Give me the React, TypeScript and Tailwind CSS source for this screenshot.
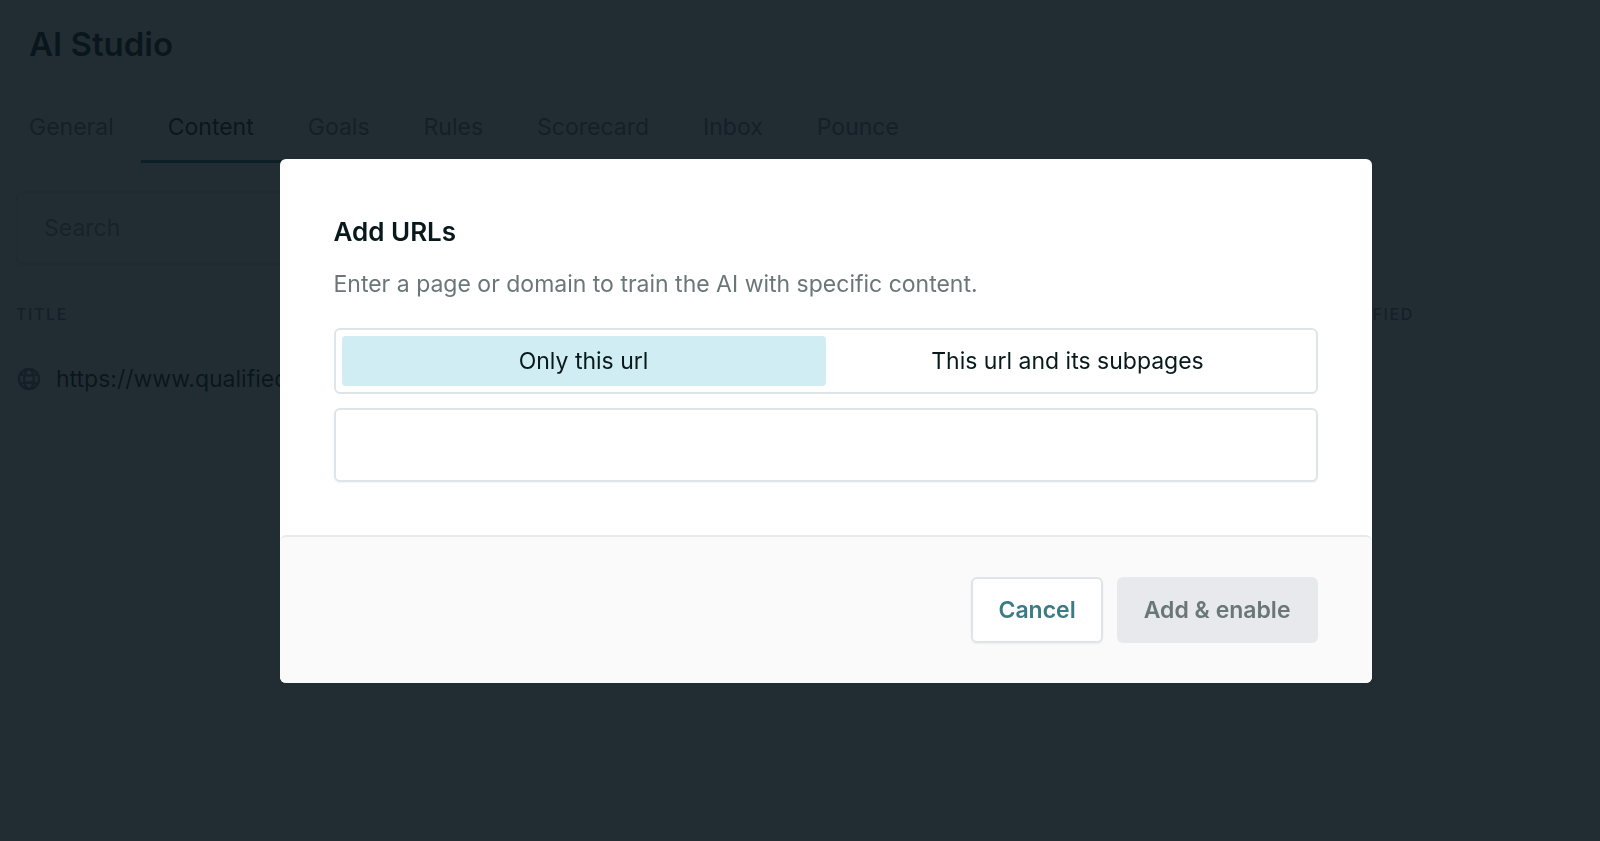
import React, { useState } from 'react';

const tabs = ['General', 'Content', 'Goals', 'Rules', 'Scorecard', 'Inbox', 'Pounce'];

const scopes = [
    { value: 'page', label: 'Only this url' },
    { value: 'subpages', label: 'This url and its subpages' },
];

const GlobeIcon: React.FC = () => (
    <svg className="size-6 shrink-0 text-[#6b7780]" viewBox="0 0 24 24" fill="none" stroke="currentColor" strokeWidth="2.4" aria-hidden="true">
        <circle cx="12" cy="12" r="10" />
        <ellipse cx="12" cy="12" rx="4.8" ry="10" />
        <path d="M3.2 7.4Q12 9.6 20.8 7.4M3.2 16.6Q12 14.4 20.8 16.6" />
    </svg>
);

const StudioPage: React.FC = () => (
    <main>
        <h1 className="px-[29px] pt-6 text-[33px] leading-10 font-semibold">AI Studio</h1>

        <nav className="mt-7 flex border-b border-[#eceff1] px-0.5">
            {tabs.map((tab) => (
                <a
                    key={tab}
                    href={`#${tab.toLowerCase()}`}
                    className={
                        tab === 'Content'
                            ? '-mb-px border-b-3 border-[#2f7482] px-[27px] pt-[17px] pb-[15px] text-[23px] leading-9'
                            : '-mb-px border-b-3 border-transparent px-[27px] pt-[17px] pb-[15px] text-[23px] leading-9 text-[#6b7780]'
                    }
                >
                    {tab}
                </a>
            ))}
        </nav>

        <div className="px-4 pt-7 pb-[26px]">
            <input
                type="search"
                aria-label="Search"
                placeholder="Search"
                className="block h-[73px] w-full max-w-[600px] rounded-md border-2 border-[#e3e7eb] bg-white px-[26px] text-[23px] shadow-sm placeholder:text-[#87928f]"
            />
        </div>

        <table className="w-full table-fixed border-collapse text-left">
            <thead>
                <tr className="h-12 border-y border-[#eceff1] text-base tracking-widest text-[#6b7780]">
                    <th className="pb-0.5 pl-4 font-medium">TITLE</th>
                    <th className="w-[330px] pb-0.5 font-medium">LAST MODIFIED</th>
                </tr>
            </thead>
            <tbody>
                <tr className="h-[81px] border-b border-[#eceff1] text-[23px]">
                    <td className="pl-[17px]">
                        <div className="flex items-center gap-[15px]">
                            <GlobeIcon />
                            https://www.qualified.com
                        </div>
                    </td>
                    <td />
                </tr>
            </tbody>
        </table>
    </main>
);

const AddUrlsDialog: React.FC = () => {
    const [scope, setScope] = useState('page');
    const [url, setUrl] = useState('');

    return (
        <div className="fixed inset-0 flex items-center justify-center bg-[#0a161d]/90 pl-[51px]">
            <form role="dialog" aria-labelledby="add-urls-title" className="w-full max-w-[1092px] overflow-hidden rounded-md bg-white">
                <div className="px-[54px] py-[53px]">
                    <h2 id="add-urls-title" className="text-[26px] leading-10 font-semibold">Add URLs</h2>
                    <p className="mt-3.5 text-[23px] leading-9 text-[#6b7777]">Enter a page or domain to train the AI with specific content.</p>

                    <fieldset className="mt-[26px] grid grid-cols-2 rounded-md border-2 border-[#dfe4e9] p-1.5">
                        {scopes.map(({ value, label }) => (
                            <label key={value} className="flex h-[50px] cursor-pointer items-center justify-center rounded-sm pt-0.5 text-[23px] has-checked:bg-[#d0edf3]">
                                <input
                                    type="radio"
                                    name="scope"
                                    value={value}
                                    checked={scope === value}
                                    onChange={() => setScope(value)}
                                    className="sr-only"
                                />
                                {label}
                            </label>
                        ))}
                    </fieldset>

                    <input
                        type="url"
                        aria-label="URL"
                        value={url}
                        onChange={(e) => setUrl(e.target.value)}
                        className="mt-3.5 block h-[74px] w-full rounded-md border-2 border-[#dfe4e9] bg-white px-[26px] text-[23px] shadow-xs outline-none"
                    />
                </div>

                <div className="flex justify-end gap-3.5 rounded-t-md border-t-2 border-[#e8eaec] bg-[#fafafa] px-[54px] py-10">
                    <button type="button" className="h-[66px] rounded-md border-2 border-[#dfe4e9] bg-white px-[25px] pt-0.5 text-[23px] font-semibold text-[#3b7b86] shadow-xs">
                        Cancel
                    </button>
                    <button type="submit" disabled={!url} className="h-[66px] rounded-md bg-[#e7e9ed] px-[27px] pt-0.5 text-[23px] font-semibold text-[#6b7777]">
                        Add &amp; enable
                    </button>
                </div>
            </form>
        </div>
    );
};

const App: React.FC = () => (
    <div className="min-h-screen bg-white font-['Inter',sans-serif] text-[#07191b]">
        <StudioPage />
        <AddUrlsDialog />
    </div>
);

export default App;
